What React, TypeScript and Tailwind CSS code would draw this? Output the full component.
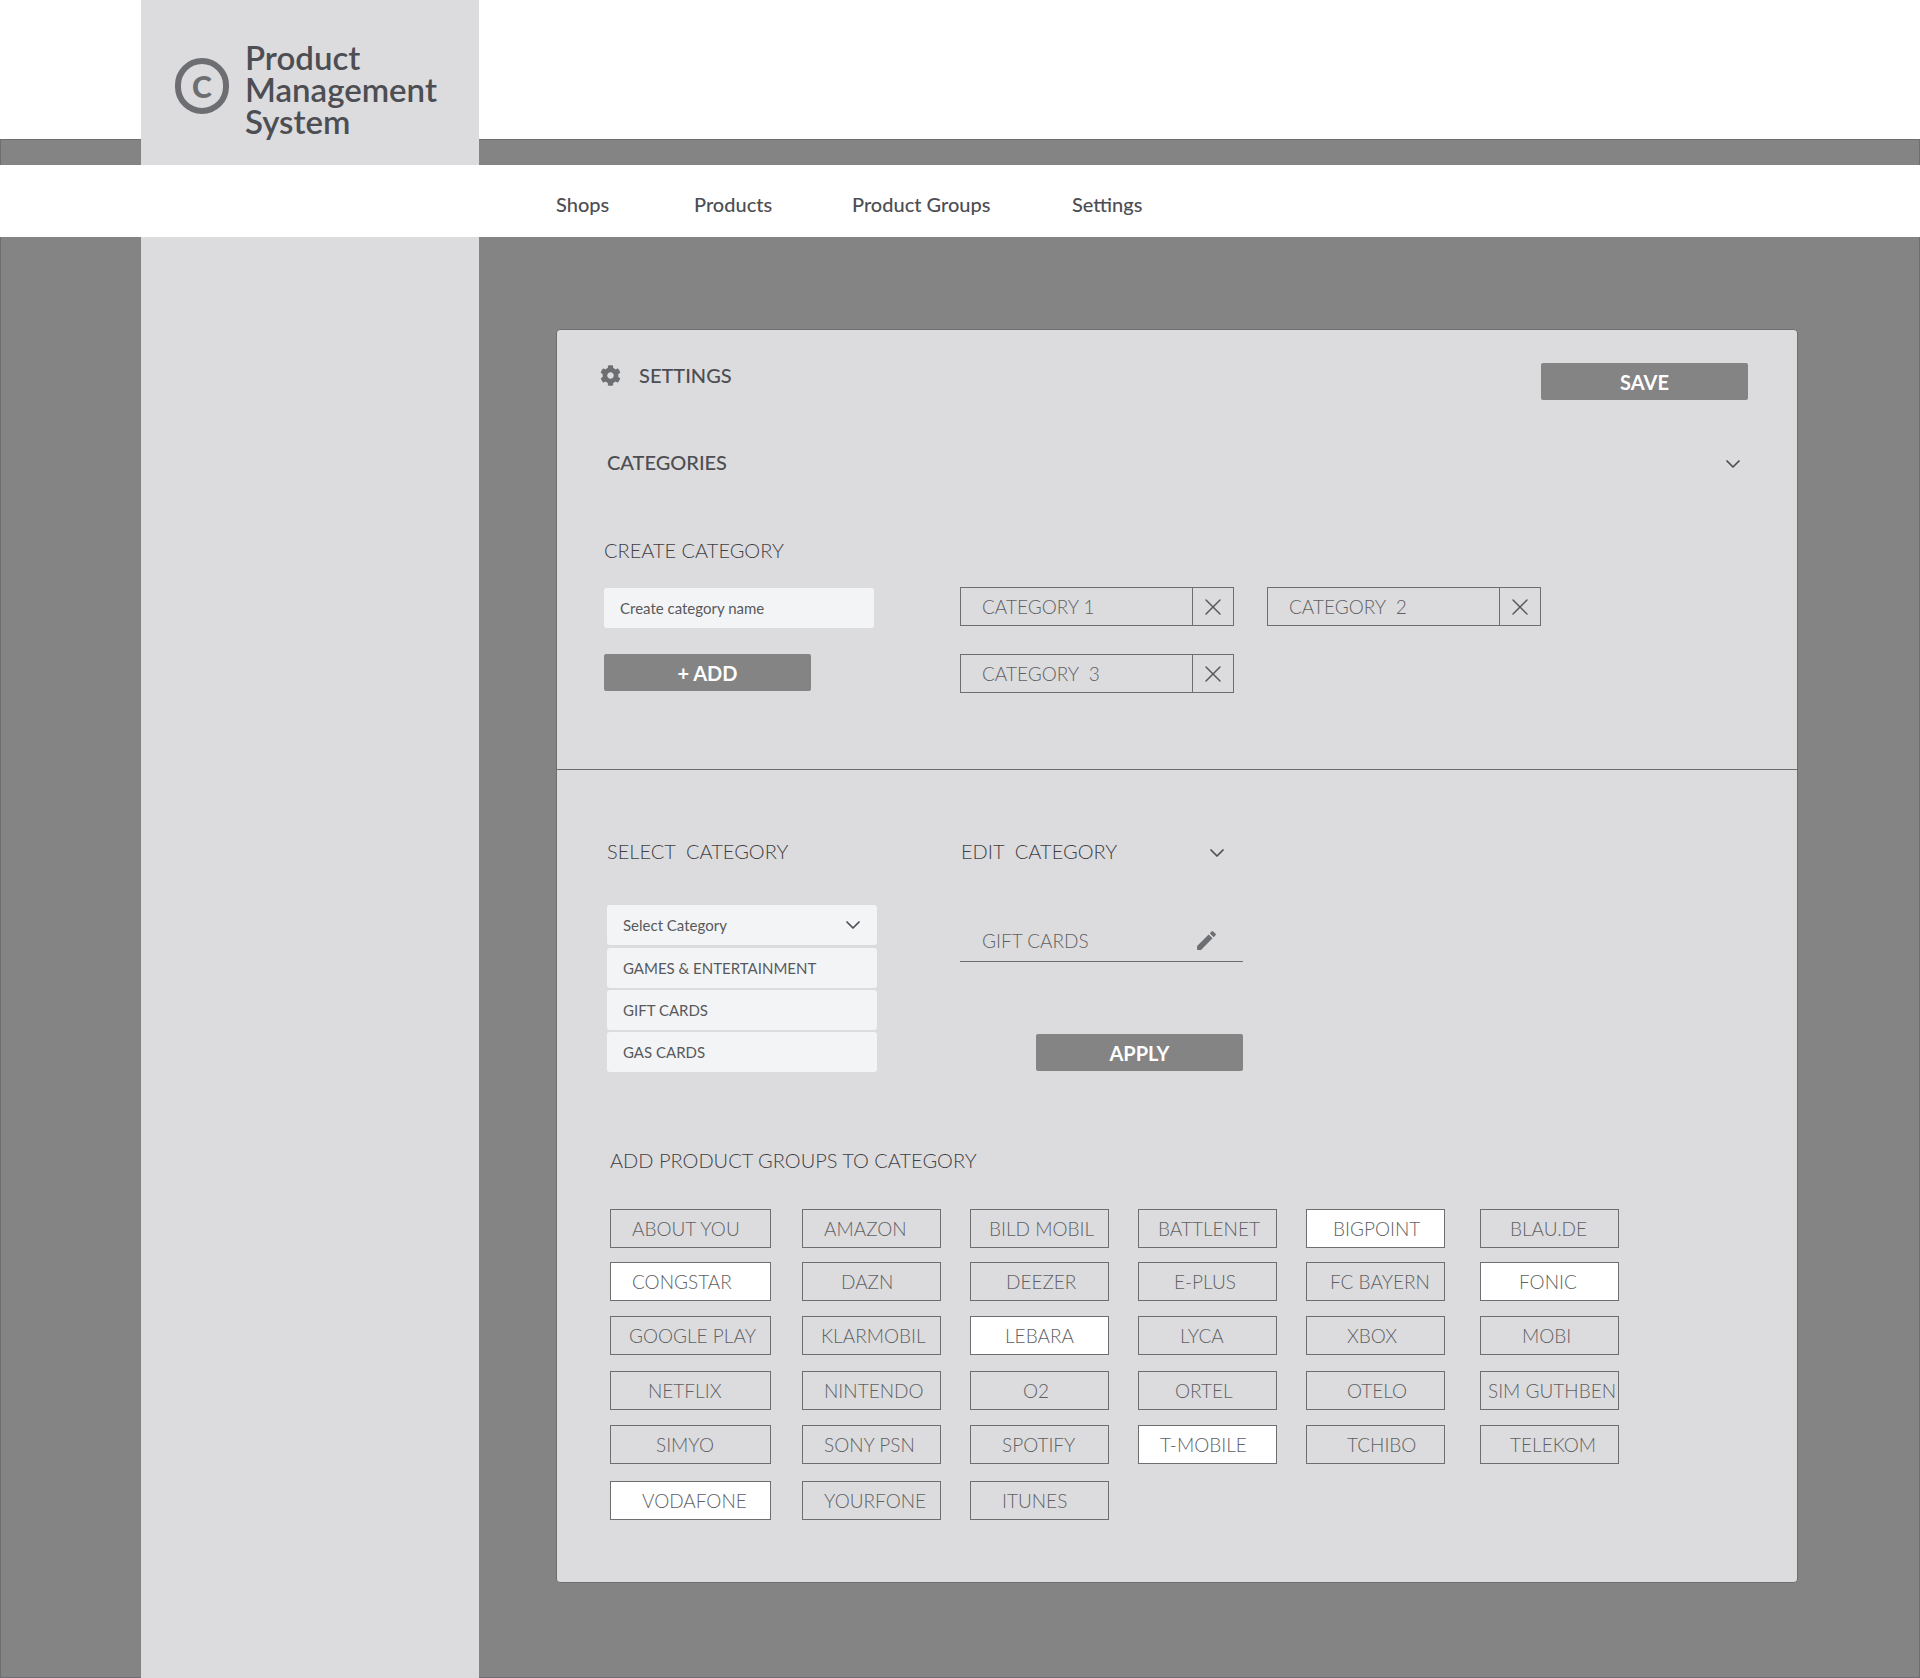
import { ChevronDown, X } from "lucide-react";
import { FaCog } from "react-icons/fa";
import { MdEdit } from "react-icons/md";

// ── Product group chips, row by row (pad = where the label starts)
const GROUPS = [
  { name: "ABOUT YOU", pad: "pl-[21px]" },
  { name: "AMAZON", pad: "pl-[21px]" },
  { name: "BILD MOBIL", pad: "pl-[18px]" },
  { name: "BATTLENET", pad: "pl-[19px]" },
  { name: "BIGPOINT", pad: "pl-[26px]", on: true },
  { name: "BLAU.DE", pad: "pl-[29px]" },
  { name: "CONGSTAR", pad: "pl-[21px]", on: true },
  { name: "DAZN", pad: "pl-[38px]" },
  { name: "DEEZER", pad: "pl-[35px]" },
  { name: "E-PLUS", pad: "pl-[35px]" },
  { name: "FC BAYERN", pad: "pl-[23px]" },
  { name: "FONIC", pad: "pl-[38px]", on: true },
  { name: "GOOGLE PLAY", pad: "pl-[18px]" },
  { name: "KLARMOBIL", pad: "pl-[18px]" },
  { name: "LEBARA", pad: "pl-[34px]", on: true },
  { name: "LYCA", pad: "pl-[41px]" },
  { name: "XBOX", pad: "pl-[40px]" },
  { name: "MOBI", pad: "pl-[41px]" },
  { name: "NETFLIX", pad: "pl-[37px]" },
  { name: "NINTENDO", pad: "pl-[21px]" },
  { name: "O2", pad: "pl-[52px]" },
  { name: "ORTEL", pad: "pl-[36px]" },
  { name: "OTELO", pad: "pl-[40px]" },
  { name: "SIM GUTHBEN", pad: "pl-[7px]" },
  { name: "SIMYO", pad: "pl-[45px]" },
  { name: "SONY PSN", pad: "pl-[21px]" },
  { name: "SPOTIFY", pad: "pl-[31px]" },
  { name: "T-MOBILE", pad: "pl-[21px]", on: true },
  { name: "TCHIBO", pad: "pl-[40px]" },
  { name: "TELEKOM", pad: "pl-[29px]" },
  { name: "VODAFONE", pad: "pl-[31px]", on: true },
  { name: "YOURFONE", pad: "pl-[21px]" },
  { name: "ITUNES", pad: "pl-[31px]" },
];

const NAV = [
  { label: "Shops", width: "w-[138px]" },
  { label: "Products", width: "w-[158px]" },
  { label: "Product Groups", width: "w-[220px]" },
  { label: "Settings", width: "w-auto" },
];

const CategoryChip = ({ label }: { label: string }) => (
  <div className="flex h-[39px] w-[274px] border border-[#6d6e71]">
    <div className="flex flex-1 items-center whitespace-pre pl-[21px] pt-[2px] text-[19px] font-light text-[#606164]">
      {label}
    </div>
    <div className="flex w-[41px] items-center justify-center border-l border-[#6d6e71]">
      <X size={28} strokeWidth={1.25} className="text-[#58595b]" />
    </div>
  </div>
);

const DarkButton = ({ label, width }: { label: string; width: string }) => (
  <div
    className={`flex h-[37px] ${width} items-center justify-center rounded-[2px] bg-[#848484] text-[20px] font-bold text-white`}
  >
    {label}
  </div>
);

const App = () => {
  return (
    <div className="w-[1920px] h-[1678px] bg-white font-['Lato',sans-serif] text-[#4d4e53] overflow-hidden">
      {/* ── Header */}
      <div className="flex h-[165px]">
        <div className="flex w-[141px] flex-col">
          <div className="h-[139px]" />
          <div className="h-[26px] border-l border-t border-[#6d6e71] bg-[#848484]" />
        </div>
        <div className="flex w-[338px] items-start bg-[#dcdcde] pl-[34px]">
          <div className="mt-[58px] flex h-[56px] w-[54px] items-center justify-center rounded-full border-[6px] border-[#6d6e71] text-[30px] font-black leading-none text-[#6d6e71]">
            C
          </div>
          <div className="ml-[16px] mt-[41px] whitespace-nowrap text-[33px] font-semibold leading-[32px]">
            Product
            <br />
            Management
            <br />
            System
          </div>
        </div>
        <div className="flex flex-1 flex-col">
          <div className="h-[139px]" />
          <div className="h-[26px] border-r border-t border-[#6d6e71] bg-[#848484]" />
        </div>
      </div>

      {/* ── Nav */}
      <div className="flex h-[72px] items-center pl-[556px] pt-[6px] text-[20px] font-medium">
        {NAV.map((n) => (
          <span key={n.label} className={n.width}>
            {n.label}
          </span>
        ))}
      </div>

      {/* ── Main */}
      <div className="flex h-[1441px]">
        <div className="w-[141px] border-b border-l border-[#6d6e71] bg-[#848484]" />
        <div className="w-[338px] bg-[#dcdcde]" />
        <div className="flex-1 border-b border-r border-[#6d6e71] bg-[#848484] pl-[77px] pt-[92px]">
          <div className="h-[1254px] w-[1242px] rounded-[4px] border border-[#6d6e71] bg-[#dcdcde]">
            {/* ── Categories section */}
            <div className="h-[440px] border-b border-[#6d6e71]">
              <div className="flex items-start justify-between pl-[43px] pr-[49px] pt-[33px]">
                <div className="flex h-[24px] items-center gap-[18px] text-[20px] font-medium">
                  <FaCog size={21} className="text-[#6d6e71]" />
                  <span>SETTINGS</span>
                </div>
                <DarkButton label="SAVE" width="w-[207px]" />
              </div>

              <div className="mt-[49px] flex h-[26px] items-center justify-between pl-[50px] pr-[52px] text-[20px] font-medium">
                <span>CATEGORIES</span>
                <ChevronDown size={24} strokeWidth={1.75} className="translate-y-[2px]" />
              </div>

              <div className="ml-[47px] mt-[63px] h-[24px] text-[20px] font-light leading-[24px] text-[#3f4045]">
                CREATE CATEGORY
              </div>

              <div className="ml-[47px] mt-[25px] flex">
                <div className="w-[356px]">
                  <div className="mt-[1px] flex h-[40px] w-[270px] items-center rounded-[3px] bg-[#f3f4f6] pl-[16px] text-[15px] text-[#58595b]">
                    Create category name
                  </div>
                  <div className="mt-[26px]">
                    <DarkButton label="+ ADD" width="w-[207px]" />
                  </div>
                </div>
                <div className="grid grid-cols-[274px_274px] gap-x-[33px] gap-y-[28px]">
                  <CategoryChip label="CATEGORY 1" />
                  <CategoryChip label="CATEGORY  2" />
                  <CategoryChip label="CATEGORY  3" />
                </div>
              </div>
            </div>

            {/* ── Select / edit section */}
            <div className="flex pl-[50px] pt-[69px]">
              <div className="w-[353px]">
                <div className="h-[24px] whitespace-pre text-[20px] font-light leading-[24px] text-[#3f4045]">
                  SELECT  CATEGORY
                </div>
                <div className="mt-[42px] flex h-[40px] w-[270px] items-center justify-between rounded-[3px] bg-[#f3f4f6] pl-[16px] pr-[12px] text-[15px] text-[#58595b]">
                  <span>Select Category</span>
                  <ChevronDown size={24} strokeWidth={1.75} className="text-[#4d4e53]" />
                </div>
                <div className="mt-[3px] flex h-[40px] w-[270px] items-center rounded-[3px] bg-[#f3f4f6] pl-[16px] text-[15px] text-[#58595b]">
                  GAMES &amp; ENTERTAINMENT
                </div>
                <div className="mt-[2px] flex h-[40px] w-[270px] items-center rounded-[3px] bg-[#f3f4f6] pl-[16px] text-[15px] text-[#58595b]">
                  GIFT CARDS
                </div>
                <div className="mt-[2px] flex h-[40px] w-[270px] items-center rounded-[3px] bg-[#f3f4f6] pl-[16px] text-[15px] text-[#58595b]">
                  GAS CARDS
                </div>
              </div>

              <div className="flex w-[283px] flex-col">
                <div className="flex h-[24px] items-center justify-between pl-[1px] pr-[14px] text-[20px] font-light text-[#3f4045]">
                  <span className="whitespace-pre">EDIT  CATEGORY</span>
                  <ChevronDown size={24} strokeWidth={1.75} className="translate-y-[2px] text-[#4d4e53]" />
                </div>
                <div className="mt-[59px] flex h-[40px] items-center justify-between border-b border-[#6d6e71] pb-[1px] pl-[22px] pr-[24px] text-[19px] font-light text-[#606164]">
                  <span>GIFT CARDS</span>
                  <MdEdit size={25} className="-translate-y-[1px] text-[#6d6e71]" />
                </div>
                <div className="mt-[72px] self-end">
                  <DarkButton label="APPLY" width="w-[207px]" />
                </div>
              </div>
            </div>

            {/* ── Product groups */}
            <div className="ml-[53px] mt-[76px] h-[24px] text-[20px] font-light leading-[24px] text-[#3f4045]">
              ADD PRODUCT GROUPS TO CATEGORY
            </div>
            <div className="ml-[53px] mt-[37px] grid grid-cols-[192px_168px_168px_168px_174px_139px] grid-rows-[53px_54px_55px_54px_56px_39px]">
              {GROUPS.map((g, i) => (
                <div
                  key={g.name}
                  className={`flex h-[39px] items-center whitespace-nowrap border border-[#6d6e71] pt-[2px] text-[19px] font-light text-[#606164] ${g.pad} ${
                    i % 6 === 0 ? "w-[161px]" : "w-[139px]"
                  } ${g.on ? "bg-white" : ""}`}
                >
                  {g.name}
                </div>
              ))}
            </div>
          </div>
        </div>
      </div>
    </div>
  );
};

export default App;
